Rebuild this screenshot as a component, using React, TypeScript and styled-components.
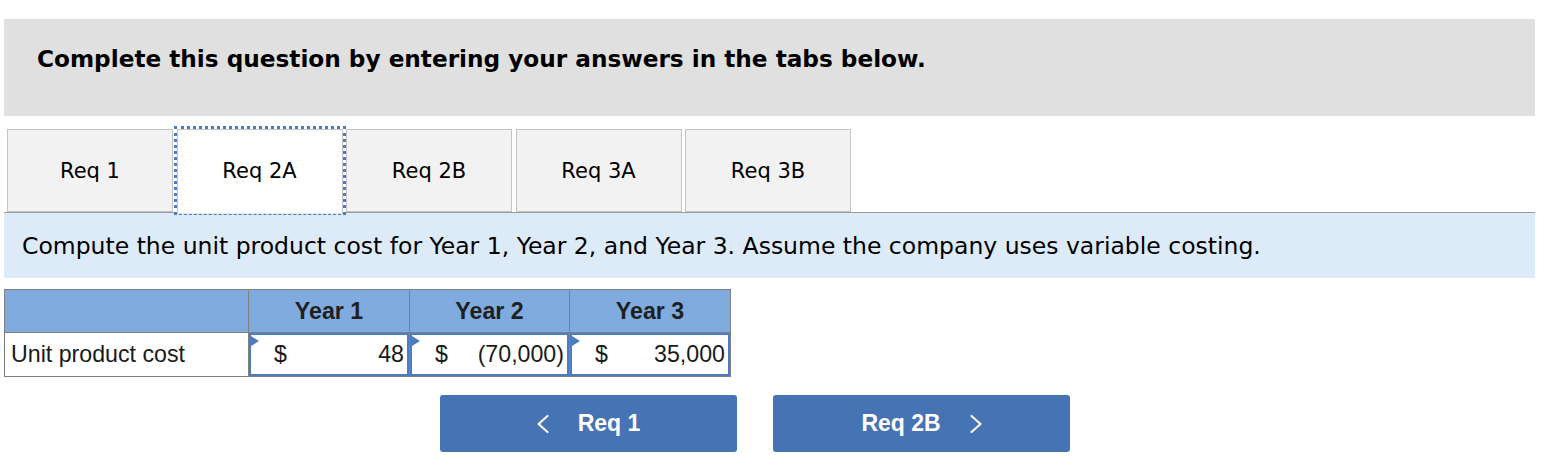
import React from "react";
import styled, { createGlobalStyle } from "styled-components";

const Global = createGlobalStyle`
  html, body { margin: 0; padding: 0; background: #ffffff; }
  body { font-family: "DejaVu Sans", Verdana, sans-serif; color: #000; }
`;

const Page = styled.div`
  width: 1531px;
  padding: 19px 0 0 4px;
`;

const Banner = styled.div`
  height: 97px;
  box-sizing: border-box;
  background: #e0e0e0;
  padding: 26px 0 0 33px;
  font-family: "DejaVu Sans", Verdana, sans-serif;
  font-weight: bold;
  font-size: 23.2px;
  line-height: 28px;
  color: #000;
`;

const TabRow = styled.div`
  display: flex;
  gap: 3.5px;
  margin-top: 13px;
  padding-left: 3px;
  border-bottom: 1px solid #9a9a9a;
  height: 83px;
`;

const Tab = styled.div<{ $active?: boolean }>`
  position: relative;
  width: 166px;
  flex: none;
  height: ${(p) => (p.$active ? "84px" : "83px")};
  box-sizing: border-box;
  border: 1px solid #c4c4c4;
  border-bottom: ${(p) => (p.$active ? "none" : "1px solid #c4c4c4")};
  padding-bottom: ${(p) => (p.$active ? "2px" : "0")};
  background: ${(p) => (p.$active ? "#ffffff" : "#f2f2f2")};
  display: flex;
  align-items: center;
  justify-content: center;
  font-size: 21px;
  color: #000;
  z-index: ${(p) => (p.$active ? 1 : 0)};
  ${(p) =>
    p.$active &&
    `
    &::after {
      content: "";
      position: absolute;
      left: -4px;
      right: -4px;
      top: -4px;
      bottom: -2px;
      border: 3px dotted #4a7bc4;
      border-bottom: 1px dashed #4a7bc4;
      pointer-events: none;
    }
  `}
`;

const Instruction = styled.div`
  height: 65px;
  box-sizing: border-box;
  background: #ddeaf7;
  display: flex;
  align-items: center;
  padding-left: 18px;
  font-size: 23.5px;
  color: #000;
`;

const Table = styled.table`
  margin-top: 11px;
  border-collapse: collapse;
  table-layout: fixed;
  width: 726px;
  font-family: "Liberation Sans", Arial, sans-serif;
  font-size: 23.2px;
  color: #1a1a1a;
`;

const HeadCell = styled.th`
  background: #80abde;
  border: 1px solid #808080;
  height: 42px;
  padding: 0;
  font-weight: bold;
  text-align: center;
  color: #1f1f1f;
`;

const LabelCell = styled.td`
  border: 1px solid #808080;
  height: 43px;
  padding: 0 0 0 6px;
  text-align: left;
  color: #1a1a1a;
`;

const InputCell = styled.td`
  border: 1px solid #808080;
  padding: 0;
  height: 43px;
`;

const InputBox = styled.div`
  position: relative;
  height: 43px;
  box-sizing: border-box;
  border: 2px solid #4d7cc1;
  display: flex;
  align-items: center;
  justify-content: space-between;
  padding: 0 3px 0 23px;
  background: #fff;
`;

const Flag = styled.span`
  position: absolute;
  left: 0;
  top: 1px;
  width: 0;
  height: 0;
  border-top: 5px solid transparent;
  border-bottom: 5px solid transparent;
  border-left: 8px solid #4d7cc1;
`;

const ButtonRow = styled.div`
  display: flex;
  gap: 36px;
  margin-top: 18px;
  padding-left: 436px;
`;

const NavButton = styled.button`
  width: 297px;
  height: 57px;
  border: none;
  border-radius: 3px;
  background: #4673b3;
  color: #fff;
  display: flex;
  align-items: center;
  justify-content: center;
  gap: 29px;
  font-family: "Liberation Sans", Arial, sans-serif;
  font-weight: bold;
  font-size: 23px;
  padding: 0;
  cursor: pointer;
`;

const Chevron = ({ dir }: { dir: "left" | "right" }) => (
  <svg width="12" height="18" viewBox="0 0 12 18" fill="none">
    <polyline
      points={dir === "left" ? "10.5,1 1.5,9 10.5,17" : "1.5,1 10.5,9 1.5,17"}
      stroke="#fff"
      strokeWidth="2"
      strokeLinecap="round"
      strokeLinejoin="round"
    />
  </svg>
);

const tabs = ["Req 1", "Req 2A", "Req 2B", "Req 3A", "Req 3B"];
const values = [
  { y: "Year 1", v: "48" },
  { y: "Year 2", v: "(70,000)" },
  { y: "Year 3", v: "35,000" },
];

export default function App() {
  return (
    <>
      <Global />
      <Page>
        <Banner>Complete this question by entering your answers in the tabs below.</Banner>
        <TabRow>
          {tabs.map((t) => (
            <Tab key={t} $active={t === "Req 2A"}>
              {t}
            </Tab>
          ))}
        </TabRow>
        <Instruction>
          Compute the unit product cost for Year 1, Year 2, and Year 3. Assume the company uses variable costing.
        </Instruction>
        <Table>
          <colgroup>
            <col style={{ width: 244 }} />
            <col style={{ width: 161 }} />
            <col style={{ width: 160 }} />
            <col style={{ width: 161 }} />
          </colgroup>
          <thead>
            <tr>
              <HeadCell />
              {values.map((c) => (
                <HeadCell key={c.y}>{c.y}</HeadCell>
              ))}
            </tr>
          </thead>
          <tbody>
            <tr>
              <LabelCell>Unit product cost</LabelCell>
              {values.map((c) => (
                <InputCell key={c.y}>
                  <InputBox>
                    <Flag />
                    <span>$</span>
                    <span>{c.v}</span>
                  </InputBox>
                </InputCell>
              ))}
            </tr>
          </tbody>
        </Table>
        <ButtonRow>
          <NavButton>
            <Chevron dir="left" />
            <span>Req 1</span>
          </NavButton>
          <NavButton>
            <span>Req 2B</span>
            <Chevron dir="right" />
          </NavButton>
        </ButtonRow>
      </Page>
    </>
  );
}
